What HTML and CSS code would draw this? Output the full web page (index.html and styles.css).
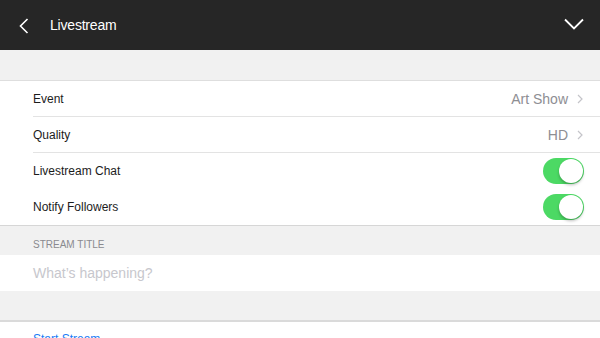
FILE: index.html
```html
<!DOCTYPE html>
<html lang="en">
<head>
<meta charset="UTF-8" />
<meta name="viewport" content="width=device-width, initial-scale=1" />
<title>Livestream</title>
<link rel="stylesheet" href="styles.css">
</head>
<body>

<div class="topbar">
  <svg class="back" width="10" height="16" viewBox="0 0 10 16">
    <path d="M8.5 1 L1.5 8 L8.5 15" fill="none" stroke="#fff" stroke-width="1.6"/>
  </svg>
  <div class="title">Livestream</div>
  <svg class="down" width="20" height="12" viewBox="0 0 20 12">
    <path d="M1 1.5 L10 10.5 L19 1.5" fill="none" stroke="#fff" stroke-width="1.8"/>
  </svg>
</div>

<div class="gap"></div>

<div class="group">
  <div class="row">
    <div class="inner">
      <span class="label">Event</span>
      <span class="value">Art Show</span>
      <svg class="chev" width="6" height="10" viewBox="0 0 6 10"><path d="M1 1 L5 5 L1 9" fill="none" stroke="#c4c4c9" stroke-width="1.2"/></svg>
    </div>
  </div>
  <div class="row">
    <div class="inner">
      <span class="label">Quality</span>
      <span class="value">HD</span>
      <svg class="chev" width="6" height="10" viewBox="0 0 6 10"><path d="M1 1 L5 5 L1 9" fill="none" stroke="#c4c4c9" stroke-width="1.2"/></svg>
    </div>
  </div>
  <div class="row">
    <div class="inner noline">
      <span class="label">Livestream Chat</span>
      <span class="toggle"><span class="knob"></span></span>
    </div>
  </div>
  <div class="row">
    <div class="inner noline">
      <span class="label">Notify Followers</span>
      <span class="toggle"><span class="knob"></span></span>
    </div>
  </div>
</div>

<div class="section">STREAM TITLE</div>
<div class="field">What’s happening?</div>

<div class="gap2"></div>

<div class="action">Start Stream</div>

</body>
</html>
```

FILE: styles.css
```css
body {
  margin: 0;
  background: #f1f1f1;
  font-family: "Liberation Sans", Arial, sans-serif;
  overflow: hidden;
}
.topbar {
  height: 50px;
  background: #262626;
  display: flex;
  align-items: center;
  padding: 0 16px 0 19px;
}
.back {
  margin-top: 1px;
}
.title {
  color: #fff;
  font-size: 14px;
  letter-spacing: -0.2px;
  margin-left: 21px;
  flex: 1;
}
.down {
  margin-top: -2px;
}
.gap {
  height: 30px;
  border-bottom: 1px solid #dedede;
}
.group {
  background: #fff;
  border-bottom: 1px solid #d6d6d6;
}
.row {
  padding-left: 33px;
}
.inner {
  height: 35px;
  border-bottom: 1px solid #e3e3e3;
  display: flex;
  align-items: center;
  padding-right: 17px;
}
.inner.noline {
  border-bottom: none;
  height: 36px;
}
.label {
  flex: 1;
  font-size: 12px;
  color: #1c1c1c;
}
.value {
  font-size: 14px;
  color: #8e8e93;
  margin-right: 9px;
}
.toggle {
  width: 41px;
  height: 26px;
  border-radius: 13px;
  background: #4cd964;
  position: relative;
  margin-right: -1px;
}
.knob {
  position: absolute;
  top: 1px;
  right: 1px;
  width: 24px;
  height: 24px;
  border-radius: 50%;
  background: #fff;
  box-shadow: 0 2px 3px rgba(0,0,0,0.25);
}
.section {
  height: 29px;
  padding-left: 33px;
  box-sizing: border-box;
  padding-top: 13px;
  font-size: 10px;
  color: #8a8a8f;
}
.field {
  height: 36px;
  background: #fff;
  padding-left: 33px;
  display: flex;
  align-items: center;
  font-size: 14px;
  color: #c7c7cd;
}
.gap2 {
  height: 29px;
  border-bottom: 2px solid #dadada;
}
.action {
  background: #fff;
  height: 16px;
  padding-left: 33px;
  padding-top: 10px;
  font-size: 12px;
  line-height: 14px;
  color: #1a7cf5;
  border-bottom: 1px solid #c8c8c8;
}
```
